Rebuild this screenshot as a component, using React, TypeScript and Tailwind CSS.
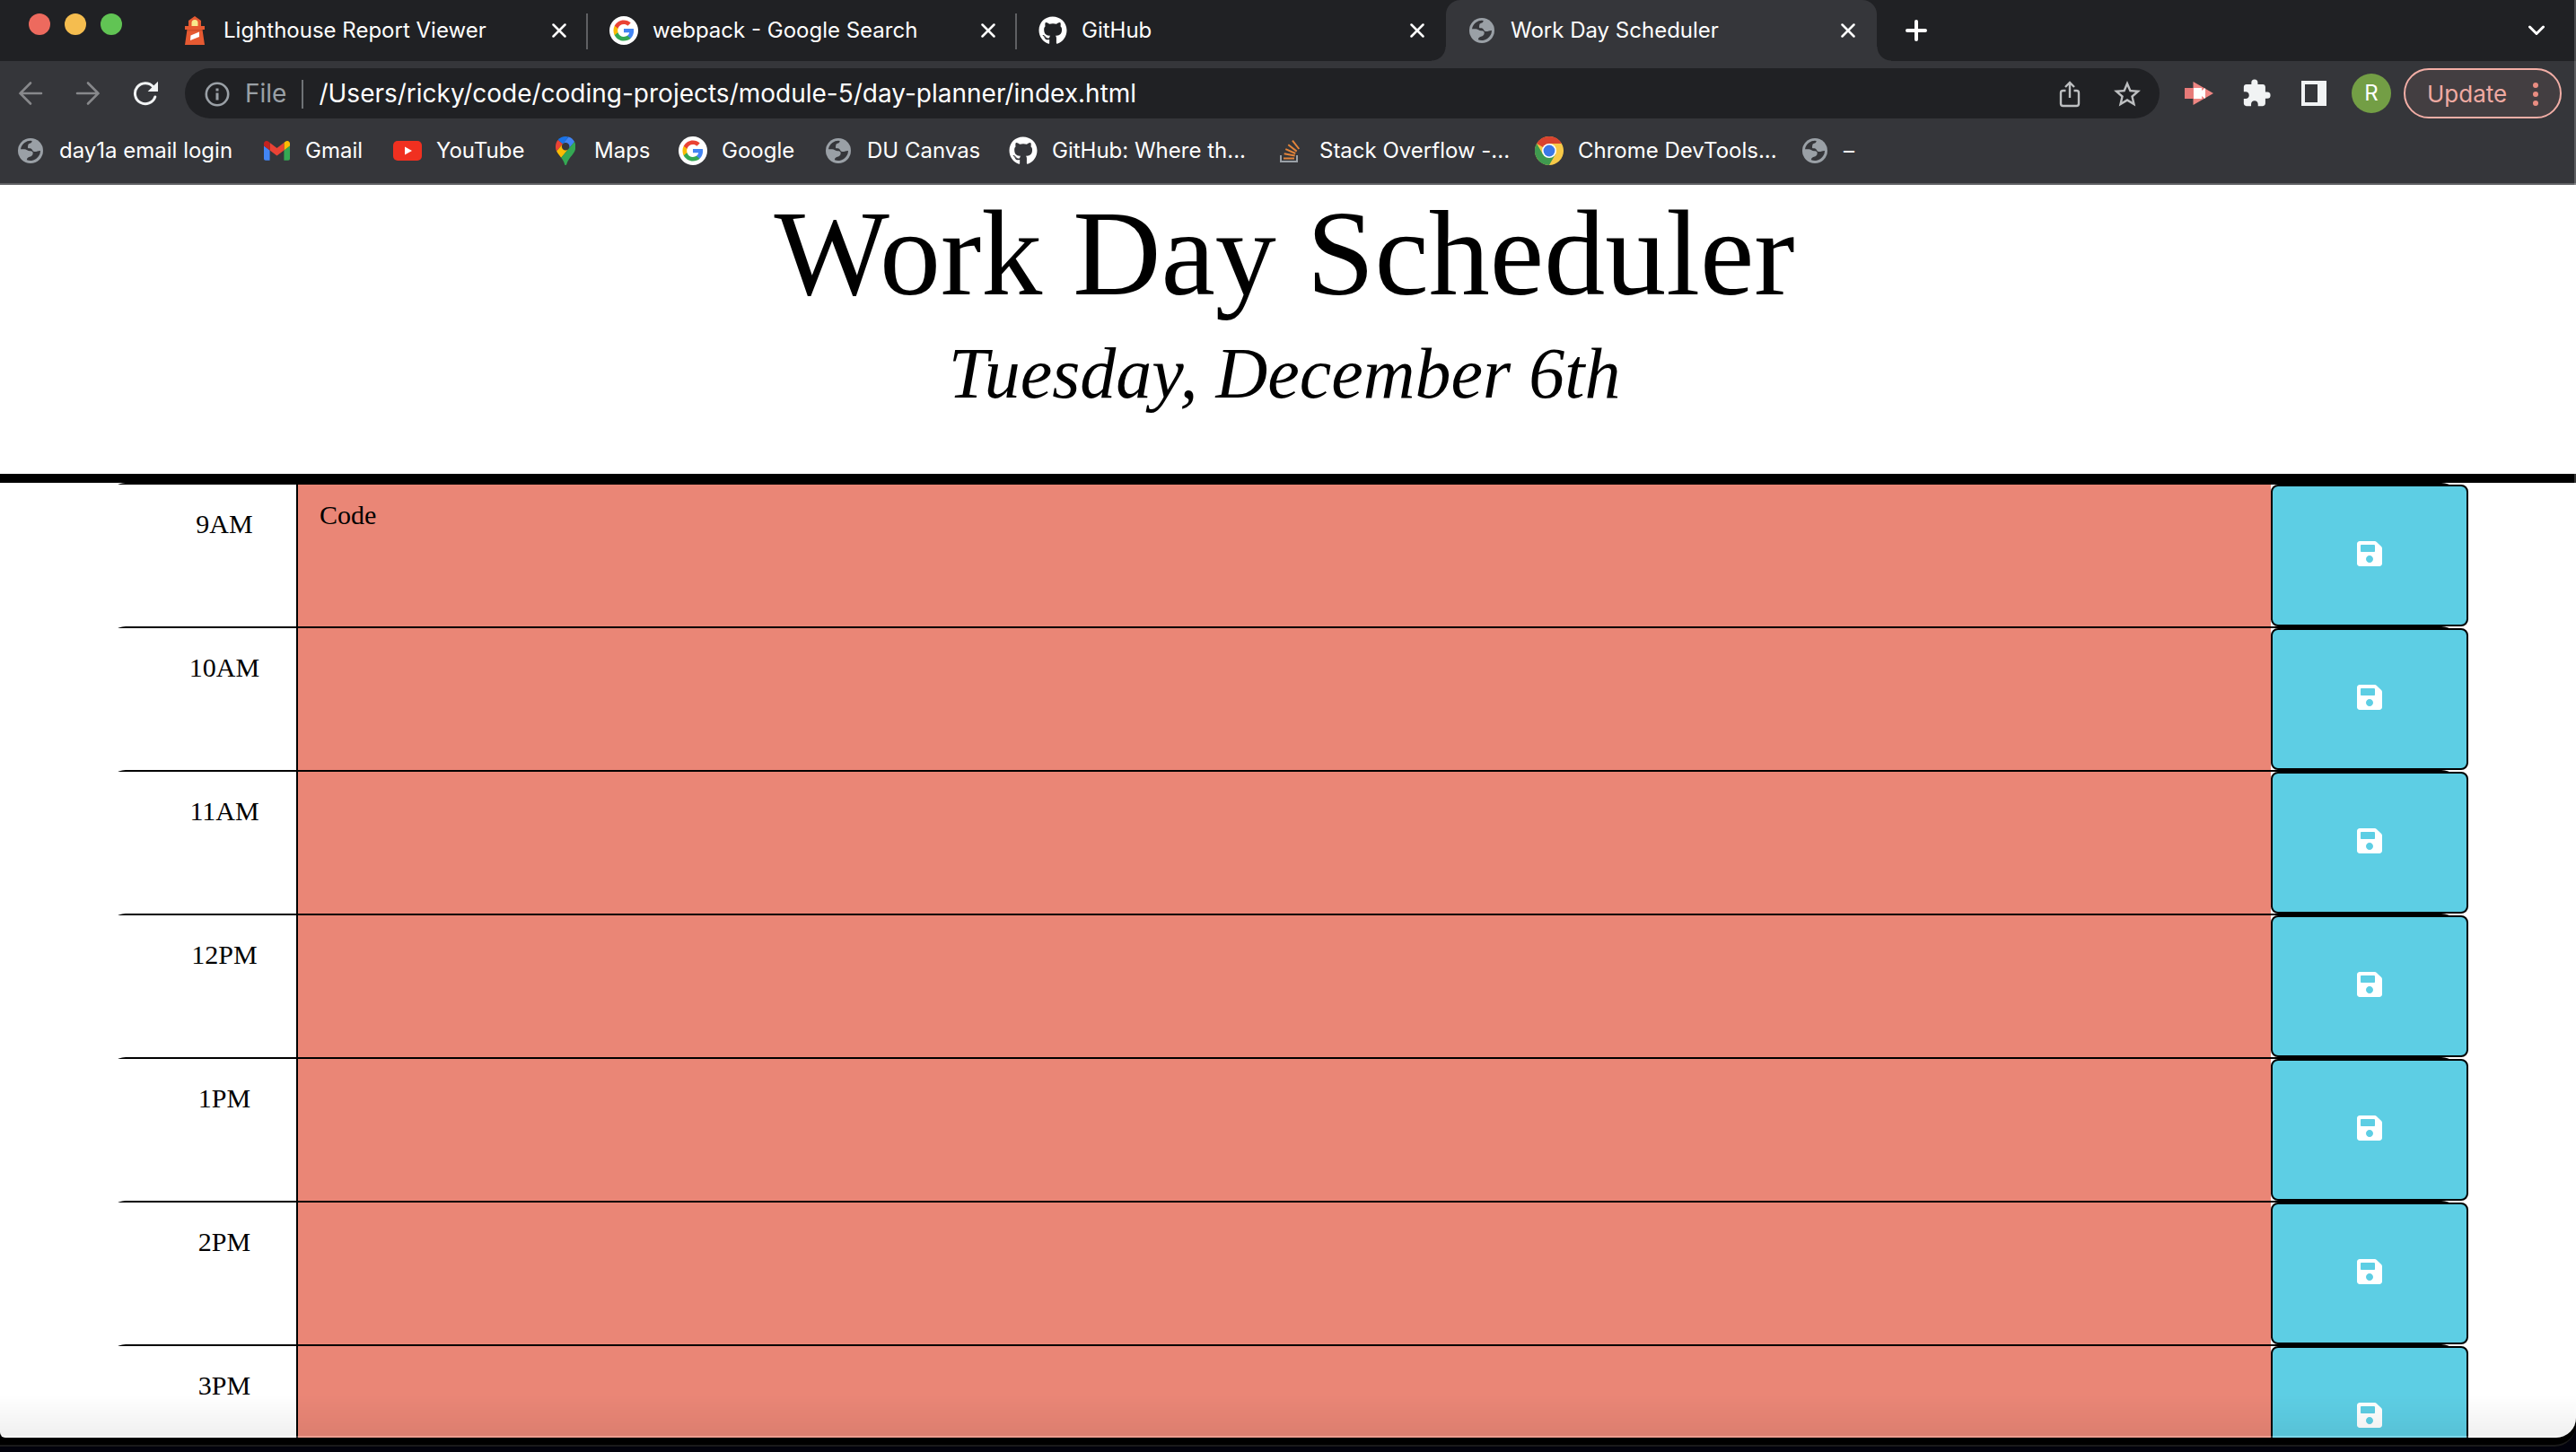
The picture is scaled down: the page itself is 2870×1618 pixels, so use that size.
import React from "react";
import { FaGithub, FaSave } from "react-icons/fa";
import { MdExtension, MdStarBorder } from "react-icons/md";

function GlobeIcon() {
  return (
    <svg viewBox="0 0 84 84" className="size-7" aria-hidden="true">
      <circle cx="42" cy="42" r="42" fill="#9aa0a6" />
      <path
        fill="#35363a"
        d="M9 37A33.500 33.500 0 0 1 47 9C47 14 44 17 38 18C33 19 34 25 33 29C32 33 35 34 41 34C47 34 47 41 52 44C59 48 70 40 75 42A33.500 33.500 0 0 1 30 73C29 67 33 64 39 62C46 60 50 56 50 50C50 44 45 43 40 43C33 43 28 37 21 37Z"
      />
    </svg>
  );
}

function GoogleIcon() {
  return (
    <svg viewBox="0 0 32 32" className="size-8" aria-hidden="true">
      <circle cx="16" cy="16" r="16" fill="#fff" />
      <g transform="translate(3.400 3.400) scale(1.050)">
        <path fill="#4285f4" d="M22.56 12.25c0-.78-.07-1.53-.2-2.25H12v4.26h5.92c-.26 1.37-1.04 2.53-2.21 3.31v2.77h3.57c2.08-1.92 3.28-4.74 3.28-8.09z" />
        <path fill="#34a853" d="M12 23c2.97 0 5.46-.98 7.28-2.66l-3.57-2.77c-.98.66-2.23 1.06-3.71 1.06-2.86 0-5.29-1.93-6.16-4.53H2.18v2.84C3.99 20.53 7.7 23 12 23z" />
        <path fill="#fbbc05" d="M5.84 14.09c-.22-.66-.35-1.36-.35-2.09s.13-1.43.35-2.09V7.07H2.18C1.43 8.55 1 10.22 1 12s.43 3.45 1.18 4.93l2.85-2.22.81-.62z" />
        <path fill="#ea4335" d="M12 5.38c1.62 0 3.06.56 4.21 1.64l3.15-3.15C17.45 2.09 14.97 1 12 1 7.7 1 3.99 3.47 2.18 7.07l3.66 2.84c.87-2.6 3.3-4.53 6.16-4.53z" />
      </g>
    </svg>
  );
}

function LighthouseIcon() {
  return (
    <svg viewBox="0 0 32 32" className="size-8" aria-hidden="true">
      <path fill="#e65a32" d="M16 0L23 5V11H27V15H24.500L27 32H5L7.500 15H5V11H9V5Z" />
      <path fill="#f8ea8c" d="M12.500 11V7.500A3.500 3.500 0 0 1 19.500 7.500V11Z" />
      <path fill="#b7411f" opacity=".5" d="M7.500 15H24.500L24.700 16.500H7.300Z" />
      <path fill="#fff" d="M11.500 21.500L21 17.500V23L11 27Z" />
    </svg>
  );
}

function GmailIcon() {
  return (
    <svg viewBox="52 42 88 66" className="w-[29px]" aria-hidden="true">
      <path fill="#4285f4" d="M58 108h14V74L52 59v43c0 3.32 2.69 6 6 6" />
      <path fill="#34a853" d="M120 108h14c3.32 0 6-2.69 6-6V59l-20 15" />
      <path fill="#fbbc04" d="M120 48v26l20-15v-8c0-7.42-8.47-11.65-14.4-7.2" />
      <path fill="#ea4335" d="M72 74V48l24 18 24-18v26L96 92" />
      <path fill="#c5221f" d="M52 51v8l20 15V48l-5.6-4.2c-5.94-4.45-14.4-.22-14.4 7.2" />
    </svg>
  );
}

function YouTubeIcon() {
  return (
    <svg viewBox="0 0 32 22" className="w-8" aria-hidden="true">
      <rect width="32" height="22" rx="5" fill="#f03020" />
      <path fill="#fff" d="M13 6.500L21 11L13 15.500Z" />
    </svg>
  );
}

function MapsIcon() {
  return (
    <svg viewBox="0 0 92.3 132.3" className="h-8" aria-hidden="true">
      <path fill="#1a73e8" d="M60.2 2.2C55.8.8 51 0 46.1 0 32 0 19.3 6.4 10.8 16.5l21.8 18.3L60.2 2.2z" />
      <path fill="#ea4335" d="M10.8 16.5C4.1 24.5 0 34.9 0 46.1c0 8.7 1.7 15.7 4.6 22l28-33.3-21.8-18.3z" />
      <path fill="#4285f4" d="M46.2 28.5c9.8 0 17.7 7.9 17.7 17.7 0 4.3-1.6 8.3-4.2 11.4 0 0 13.9-16.6 27.5-32.7-5.6-10.8-15.3-19-27-22.7L32.6 34.8c3.3-3.8 8.1-6.3 13.6-6.3" />
      <path fill="#fbbc04" d="M46.2 63.8c-9.8 0-17.7-7.9-17.7-17.7 0-4.3 1.5-8.3 4.1-11.3l-28 33.3c4.8 10.6 12.8 19.2 21 29.9l34.1-40.5c-3.3 3.9-8.1 6.3-13.5 6.3" />
      <path fill="#34a853" d="M59.1 109.2c15.4-24.1 33.3-35 33.3-63 0-7.7-1.9-14.9-5.2-21.3L25.6 98c2.6 3.4 5.3 7.3 7.9 11.3 9.4 14.5 6.8 23.1 12.8 23.1s3.4-8.7 12.8-23.2" />
    </svg>
  );
}

function StackOverflowIcon() {
  return (
    <svg viewBox="0 0 32 32" className="size-8" fill="none" strokeWidth="2" aria-hidden="true">
      <path stroke="#9aa0a6" d="M5 21V28H23V21" />
      <path stroke="#e2843b" d="M8 24.500H20M8.700 19.200L20.700 21.600M10.300 14.200L21.300 19M13.300 9.300L22.700 16.600M18 4.700L25.300 14" />
    </svg>
  );
}

function ChromeIcon() {
  return (
    <svg viewBox="0 0 32 32" className="size-8" aria-hidden="true">
      <circle cx="16" cy="16" r="16" fill="#f7c948" />
      <path fill="#d8432f" d="M16 16L2.140 8A16 16 0 0 1 29.860 8H16Z" />
      <path fill="#3f9a4f" d="M2.140 8A16 16 0 0 0 16 32L22.900 20L9.100 20Z" />
      <circle cx="16" cy="16" r="8" fill="#fff" />
      <circle cx="16" cy="16" r="6.400" fill="#3b78e7" />
    </svg>
  );
}

function GitHubIcon() {
  return <FaGithub className="size-8 text-white" aria-hidden="true" />;
}

function CloseIcon() {
  return (
    <svg viewBox="0 0 16 16" className="size-4" fill="none" stroke="#fff" strokeWidth="2.500" strokeLinecap="round" aria-hidden="true">
      <path d="M1.500 1.500L14.500 14.500M14.500 1.500L1.500 14.500" />
    </svg>
  );
}

function ArrowIcon({ forward = false }: { forward?: boolean }) {
  return (
    <svg viewBox="0 0 28 28" className="size-7" fill="none" stroke="#87888b" strokeWidth="2.600" strokeLinecap="round" aria-hidden="true">
      <path d={forward ? "M2 14H25.500M14 2.500L25.500 14L14 25.500" : "M26 14H2.500M14 2.500L2.500 14L14 25.500"} />
    </svg>
  );
}

function ReloadIcon() {
  return (
    <svg viewBox="0 0 28 28" className="size-7" aria-hidden="true">
      <path fill="none" stroke="#f1f3f4" strokeWidth="3" strokeLinecap="round" d="M22.500 6.500A11.500 11.500 0 1 0 24.800 18" />
      <path fill="#f1f3f4" d="M28 0.800V12H16.600Z" />
    </svg>
  );
}

const tabs = [
  { title: "Lighthouse Report Viewer", icon: <LighthouseIcon />, active: false, divider: true },
  { title: "webpack - Google Search", icon: <GoogleIcon />, active: false, divider: true },
  { title: "GitHub", icon: <GitHubIcon />, active: false, divider: false },
  { title: "Work Day Scheduler", icon: <GlobeIcon />, active: true, divider: false },
];

const bookmarks = [
  { title: "day1a email login", icon: <GlobeIcon />, width: "w-[274px]" },
  { title: "Gmail", icon: <GmailIcon />, width: "w-[146px]" },
  { title: "YouTube", icon: <YouTubeIcon />, width: "w-[176px]" },
  { title: "Maps", icon: <MapsIcon />, width: "w-[142px]" },
  { title: "Google", icon: <GoogleIcon />, width: "w-[162px]" },
  { title: "DU Canvas", icon: <GlobeIcon />, width: "w-[206px]" },
  { title: "GitHub: Where th...", icon: <GitHubIcon />, width: "w-[298px]" },
  { title: "Stack Overflow -...", icon: <StackOverflowIcon />, width: "w-[288px]" },
  { title: "Chrome DevTools...", icon: <ChromeIcon />, width: "w-[296px]" },
  { title: "–", icon: <GlobeIcon />, width: "w-16" },
];

const hours = [
  { label: "9AM", note: "Code" },
  { label: "10AM", note: "" },
  { label: "11AM", note: "" },
  { label: "12PM", note: "" },
  { label: "1PM", note: "" },
  { label: "2PM", note: "" },
  { label: "3PM", note: "" },
];

function TabStrip() {
  return (
    <div className="flex h-[68px] bg-[#202124]">
      <div className="flex h-[54px] w-[177px] items-center gap-4 pl-8">
        <button aria-label="Close window" className="size-6 rounded-full bg-[#ed6a5e]" />
        <button aria-label="Minimize window" className="size-6 rounded-full bg-[#f5bd4f]" />
        <button aria-label="Zoom window" className="size-6 rounded-full bg-[#61c454]" />
      </div>
      {tabs.map((tab) => (
        <div
          key={tab.title}
          className={
            tab.active
              ? "relative flex w-[480px] items-center rounded-t-2xl bg-[#35363a] pr-4 pl-6"
              : "relative flex w-[478px] items-center pr-4 pl-6"
          }
        >
          {tab.active && (
            <>
              <span className="absolute bottom-0 -left-4 size-4 bg-[radial-gradient(circle_at_0_0,transparent_15px,#35363a_16px)]" />
              <span className="absolute -right-4 bottom-0 size-4 bg-[radial-gradient(circle_at_100%_0,transparent_15px,#35363a_16px)]" />
            </>
          )}
          <span className="flex w-8 shrink-0 justify-center">{tab.icon}</span>
          <span className="ml-4 flex-1 truncate">{tab.title}</span>
          <button aria-label={`Close ${tab.title}`} className="flex size-8 items-center justify-center">
            <CloseIcon />
          </button>
          {tab.divider && <span className="absolute top-[15px] right-0 h-10 w-0.5 bg-[#5f6063]" />}
        </div>
      ))}
      <button aria-label="New tab" className="flex w-[88px] items-center justify-center">
        <svg viewBox="0 0 24 24" className="size-6" stroke="#fff" strokeWidth="4" strokeLinecap="round" aria-hidden="true">
          <path d="M12 2V22M2 12H22" />
        </svg>
      </button>
      <button aria-label="Search tabs" className="ml-auto flex w-[88px] items-center justify-center">
        <svg viewBox="0 0 18 12" className="w-[18px]" fill="none" stroke="#fff" strokeWidth="3" strokeLinecap="round" strokeLinejoin="round" aria-hidden="true">
          <path d="M1.500 2L9 9.500L16.500 2" />
        </svg>
      </button>
    </div>
  );
}

function Toolbar() {
  return (
    <div className="flex pt-2 pr-4 pl-0.5">
      <button aria-label="Back" className="flex w-16 items-center justify-center">
        <ArrowIcon />
      </button>
      <button aria-label="Forward" className="flex w-16 items-center justify-center">
        <ArrowIcon forward />
      </button>
      <button aria-label="Reload" className="flex w-16 items-center justify-center">
        <ReloadIcon />
      </button>
      <div className="mx-3 flex h-14 flex-1 items-center rounded-full bg-[#202124] pt-0.5 pr-1 pl-[22px] text-[28px]">
        <svg viewBox="0 0 28 28" className="size-7" fill="none" stroke="#9aa0a6" strokeWidth="2.600" aria-hidden="true">
          <circle cx="14" cy="14" r="12.200" />
          <path strokeWidth="3" d="M14 12.500V20.500M14 7.500V10.500" />
        </svg>
        <span className="ml-[17px] text-[#9aa0a6]">File</span>
        <span className="mx-[17px] h-8 w-0.5 bg-[#6f7276]" />
        <input
          aria-label="Address"
          className="min-w-0 flex-1 bg-transparent text-white outline-none"
          defaultValue="/Users/ricky/code/coding-projects/module-5/day-planner/index.html"
        />
        <button aria-label="Share" className="flex w-16 items-center justify-center">
          <svg viewBox="0 0 24 30" className="w-6" fill="none" stroke="#bdbfc1" strokeWidth="2.400" aria-hidden="true">
            <path d="M7.500 11H4.500Q2 11 2 13.500V25.500Q2 28 4.500 28H19.500Q22 28 22 25.500V13.500Q22 11 19.500 11H16.500M12 19V2M7 7L12 2L17 7" />
          </svg>
        </button>
        <button aria-label="Bookmark this page" className="flex w-16 items-center justify-center">
          <MdStarBorder className="size-9 text-[#bdbfc1]" />
        </button>
      </div>
      <button aria-label="Screen recorder" className="flex w-16 items-center justify-center">
        <svg viewBox="0 0 32 28" className="w-8" aria-hidden="true">
          <path fill="#e77a78" d="M0 8H10V20H0Z" />
          <path fill="#ef8683" d="M9.500 1L32 14L9.500 27Z" />
          <path fill="#fff" d="M10 8H19V11L23 8V20L19 17V20H10Z" />
        </svg>
      </button>
      <button aria-label="Extensions" className="flex w-16 items-center justify-center">
        <MdExtension className="size-[34px] text-[#f1f3f4]" />
      </button>
      <button aria-label="Side panel" className="flex w-16 items-center justify-center">
        <svg viewBox="0 0 28 28" className="size-7" aria-hidden="true">
          <path fill="#f1f3f4" fillRule="evenodd" d="M0 0H28V28H0ZM4 4V24H18V4Z" />
        </svg>
      </button>
      <button aria-label="Profile" className="flex w-16 items-center justify-center">
        <span className="flex size-11 items-center justify-center rounded-full bg-[#739e45] text-white">R</span>
      </button>
      <button className="ml-1 flex h-14 w-[176px] items-center justify-between rounded-full border-2 border-[#f2aea6] bg-[#433e41] pt-0.5 pr-6 pl-6 text-[26px] text-[#f0aaa2]">
        Update
        <svg viewBox="0 0 6 28" className="h-7" fill="#e98d82" aria-hidden="true">
          <circle cx="3" cy="4" r="3" />
          <circle cx="3" cy="14" r="3" />
          <circle cx="3" cy="24" r="3" />
        </svg>
      </button>
    </div>
  );
}

function BookmarkBar() {
  return (
    <nav className="flex h-[74px] items-center border-b-2 border-[#5f6063] pl-[18px]">
      {bookmarks.map((b) => (
        <div key={b.title} className={b.width}>
          <a href="#" className="flex items-center gap-4 whitespace-nowrap">
            <span className="flex w-8 justify-center">{b.icon}</span>
            {b.title}
          </a>
        </div>
      ))}
    </nav>
  );
}

function HourRow({ label, note }: { label: string; note: string }) {
  return (
    <div className="mr-[130px] ml-[120px] flex h-40 rounded-[20px] border-t-2 border-black text-[30px] leading-[48px]">
      <label htmlFor={label} className="w-[212px] border-r-2 border-black bg-white pt-5 pl-[50px] text-center">
        {label}
      </label>
      <textarea
        id={label}
        defaultValue={note}
        className="flex-1 resize-none bg-[#ea8676] px-6 pt-2.5 outline-none"
      />
      <button
        aria-label={`Save ${label}`}
        className="-mr-2.5 flex w-[220px] items-center justify-center rounded-lg border-2 border-black bg-[#5dcee4] pb-1 text-white"
      >
        <FaSave className="size-8" />
      </button>
    </div>
  );
}

export default function App() {
  return (
    <div className="flex h-screen flex-col bg-[#02020c]">
      <div className="flex min-h-0 flex-1 flex-col rounded-br-3xl border-b-2 border-[#1a1a1a] bg-black pb-2">
        <div className="relative flex min-h-0 flex-1 flex-col overflow-hidden rounded-br-[22px] rounded-bl-md bg-white">
          <header className="bg-[#35363a] font-['Inter',sans-serif] text-2xl text-white">
            <TabStrip />
            <Toolbar />
            <BookmarkBar />
          </header>
          <main className="min-h-0 flex-1 overflow-hidden font-['Liberation_Serif',serif] text-black">
            <div className="border-b-[10px] border-black pr-2 pb-[68px] text-center">
              <h1 className="text-[136px] leading-[152px]">Work Day Scheduler</h1>
              <p className="mt-3.5 text-[80px] leading-[88px] italic">Tuesday, December 6th</p>
            </div>
            {hours.map((h) => (
              <HourRow key={h.label} label={h.label} note={h.note} />
            ))}
          </main>
          <div className="pointer-events-none absolute inset-x-0 bottom-0 h-12 border-b-2 border-white/20 bg-linear-to-b from-transparent to-black/6" />
          <div className="pointer-events-none absolute inset-y-0 right-0 w-0.5 bg-white/20" />
        </div>
      </div>
      <div className="h-1.5" />
    </div>
  );
}
